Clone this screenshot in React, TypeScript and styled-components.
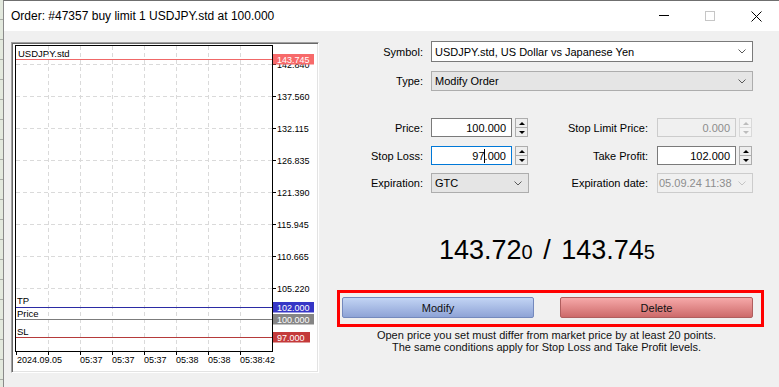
import React from "react";
import styled, { createGlobalStyle } from "styled-components";

const GlobalStyle = createGlobalStyle`
  html, body {
    margin: 0;
    padding: 0;
    background: #dfe5da;
  }
  body {
    font-family: "Liberation Sans", Arial, sans-serif;
    font-size: 11px;
    color: #000;
  }
  * {
    box-sizing: border-box;
  }
`;

const Screen = styled.div`
  display: flex;
  width: 779px;
  height: 387px;
  overflow: hidden;
`;

const Desktop = styled.div`
  width: 3px;
  flex: none;
  background: repeating-linear-gradient(
    to bottom,
    #e3e9de 0px,
    #e3e9de 19px,
    #a9ada6 19px,
    #a9ada6 20px
  );
`;

const Window = styled.div`
  flex: 1;
  display: flex;
  flex-direction: column;
  border-left: 1px solid #8a8a8a;
  border-top: 1px solid #6f6f6f;
  background: #f0f0f0;
`;

const TitleBar = styled.div`
  height: 30px;
  flex: none;
  display: flex;
  align-items: center;
  background: #ffffff;
  padding-left: 7px;
`;

const Title = styled.div`
  flex: 1;
  font-size: 12px;
  color: #000;
  white-space: nowrap;
`;

const CaptionButton = styled.div`
  width: 46px;
  height: 30px;
  display: flex;
  align-items: center;
  justify-content: center;
`;

const Body = styled.div`
  flex: 1;
  display: flex;
`;

const ChartPanel = styled.div`
  width: 308px;
  height: 331px;
  margin: 11px 0 0 7px;
  flex: none;
  background: #ffffff;
  border: 1px solid;
  border-color: #a0a0a0 #ffffff #ffffff #a0a0a0;
  box-shadow: inset 1px 1px 0 #696969, inset -1px -1px 0 #e3e3e3;

  svg {
    display: block;
  }
`;

const Form = styled.div`
  flex: 1;
  display: flex;
  flex-direction: column;
`;

const SelectRow = styled.div<{ $h: number; $mt: number }>`
  display: grid;
  grid-template-columns: 112px 322px;
  height: ${(p) => p.$h}px;
  margin-top: ${(p) => p.$mt}px;
`;

const ParamRow = styled.div<{ $h: number; $mt: number }>`
  display: grid;
  grid-template-columns: 112px 98px 128px 96px;
  height: ${(p) => p.$h}px;
  margin-top: ${(p) => p.$mt}px;
`;

const Label = styled.div<{ $pad?: number }>`
  display: flex;
  align-items: center;
  justify-content: flex-end;
  padding-right: ${(p) => p.$pad ?? 8}px;
  white-space: nowrap;
`;

const FieldCell = styled.div`
  display: flex;
  gap: 3px;
`;

type Tone = "white" | "grey" | "disabled";

const comboBorder: Record<Tone, string> = {
  white: "#7a7a7a",
  grey: "#adadad",
  disabled: "#cccccc",
};

const comboBg: Record<Tone, string> = {
  white: "#ffffff",
  grey: "#e5e5e5",
  disabled: "#f0f0f0",
};

const Combo = styled.div<{ $tone: Tone; $padLeft?: number }>`
  flex: 1;
  height: 100%;
  display: flex;
  align-items: center;
  padding: 0 6px 0 ${(p) => p.$padLeft ?? 3}px;
  border: 1px solid ${(p) => comboBorder[p.$tone]};
  background: ${(p) => comboBg[p.$tone]};
  color: ${(p) => (p.$tone === "disabled" ? "#8d8d8d" : "#000")};
  white-space: nowrap;
  overflow: hidden;
`;

const ComboText = styled.span`
  flex: 1;
`;

const NumberBox = styled.div<{ $w: number; $state?: "focus" | "disabled" }>`
  width: ${(p) => p.$w}px;
  height: 100%;
  display: flex;
  align-items: center;
  justify-content: flex-end;
  padding-right: 5px;
  border: 1px solid
    ${(p) =>
      p.$state === "focus"
        ? "#0078d7"
        : p.$state === "disabled"
          ? "#cccccc"
          : "#7a7a7a"};
  background: ${(p) => (p.$state === "disabled" ? "#f0f0f0" : "#ffffff")};
  color: ${(p) => (p.$state === "disabled" ? "#8d8d8d" : "#000")};
`;

const Caret = styled.span`
  display: inline-block;
  width: 1px;
  height: 14px;
  background: #000;
  margin: 0 -0.5px;
`;

const Spinner = styled.div<{ $disabled?: boolean }>`
  width: 13px;
  height: 100%;
  display: flex;
  flex-direction: column;
  border: 1px solid ${(p) => (p.$disabled ? "#d9d9d9" : "#adadad")};
  background: ${(p) => (p.$disabled ? "#f4f4f4" : "#eeeeee")};
`;

const SpinButton = styled.div<{ $top?: boolean; $disabled?: boolean }>`
  flex: 1;
  display: flex;
  align-items: center;
  justify-content: center;
  border-bottom: ${(p) =>
    p.$top ? `1px solid ${p.$disabled ? "#d9d9d9" : "#adadad"}` : "none"};
`;

const Arrow = styled.span<{ $dir: "up" | "down"; $disabled?: boolean }>`
  width: 0;
  height: 0;
  border-left: 3px solid transparent;
  border-right: 3px solid transparent;
  ${(p) =>
    p.$dir === "up"
      ? `border-bottom: 3px solid ${p.$disabled ? "#bcbcbc" : "#000"};`
      : `border-top: 3px solid ${p.$disabled ? "#bcbcbc" : "#000"};`}
`;

const Quote = styled.div`
  margin-top: 41px;
  padding-right: 4px;
  text-align: center;
  font-size: 27px;
  line-height: 32px;
  color: #000;
  white-space: nowrap;
`;

const QuoteTail = styled.span`
  font-size: 20px;
  line-height: 1;
`;

const QuoteSep = styled.span`
  margin: 0 3px;
`;

const ActionBox = styled.div`
  margin: 24px 0 0 18px;
  width: 427px;
  height: 37px;
  border: 3px solid #ff0000;
  padding: 4px 8px 0 2px;
  display: flex;
  gap: 26px;
`;

const ActionButton = styled.div<{ $kind: "modify" | "delete" }>`
  height: 21px;
  width: ${(p) => (p.$kind === "modify" ? 192 : 193)}px;
  display: flex;
  align-items: center;
  justify-content: center;
  font-size: 11px;
  color: #111;
  border-radius: 2px;
  border: 1px solid ${(p) => (p.$kind === "modify" ? "#7489bd" : "#b05e5e")};
  background: ${(p) =>
    p.$kind === "modify"
      ? "linear-gradient(to bottom, #c2d4f4, #8ea3d6)"
      : "linear-gradient(to bottom, #f6a9a9, #cd6a6a)"};
`;

const Notice = styled.div`
  margin-top: 2px;
  padding-right: 5px;
  text-align: center;
  line-height: 12px;
  color: #111;
`;

const Chevron = ({ disabled }: { disabled?: boolean }) => (
  <svg width="8" height="5" viewBox="0 0 8 5">
    <polyline
      points="0.5,0.5 4,4 7.5,0.5"
      fill="none"
      stroke={disabled ? "#c4c4c4" : "#5a5a5a"}
      strokeWidth="1"
    />
  </svg>
);

const hLines = [64.5, 96.5, 128.5, 160.5, 192.5, 224.5, 256.5, 288.5];
const vLines = [48.5, 80.5, 112.5, 144.5, 176.5, 208.5, 240.5];
const yLabels: [string, number][] = [
  ["142.840", 64.5],
  ["137.560", 96.5],
  ["132.115", 128.5],
  ["126.835", 160.5],
  ["121.390", 192.5],
  ["115.945", 224.5],
  ["110.665", 256.5],
  ["105.220", 288.5],
];
const timeLabels: [string, number][] = [
  ["2024.09.05", 17],
  ["05:37", 80],
  ["05:37", 112],
  ["05:37", 144],
  ["05:38", 176],
  ["05:38", 208],
  ["05:38:42", 240],
];

const levels = [
  { name: "TP", nameY: 304, y: 307.5, line: "#2b2ba4", box: "#3636c6", value: "102.000", boxY: 302, boxW: 41 },
  { name: "Price", nameY: 317, y: 319.5, line: "#7c7c7c", box: "#858585", value: "100.000", boxY: 314, boxW: 41 },
  { name: "SL", nameY: 335, y: 337.5, line: "#b53a3a", box: "#c43a3a", value: "97.000", boxY: 332, boxW: 37 },
];

const PriceChart = () => (
  <svg
    width={306}
    height={329}
    viewBox="12 43 306 329"
    fontFamily='"Liberation Sans", Arial, sans-serif'
    fontSize={9}
  >
    {hLines.map((y) => (
      <line key={`h${y}`} x1={16} x2={272} y1={y} y2={y} stroke="#dadada" strokeDasharray="4 3" />
    ))}
    {vLines.map((x) => (
      <line key={`v${x}`} x1={x} x2={x} y1={46} y2={351} stroke="#dadada" strokeDasharray="4 3" />
    ))}
    <rect x={15.5} y={45.5} width={257} height={306} fill="none" stroke="#000" />
    {yLabels.map(([t, y]) => (
      <g key={t}>
        <line x1={272} x2={276} y1={y} y2={y} stroke="#000" />
        <text x={277} y={y + 3.5} fill="#000">
          {t}
        </text>
      </g>
    ))}
    {[16, ...vLines.map((x) => x - 0.5)].map((x) => (
      <line key={`t${x}`} x1={x + 0.5} x2={x + 0.5} y1={351} y2={355} stroke="#000" />
    ))}
    {timeLabels.map(([t, x], i) => (
      <text key={`${t}${i}`} x={x} y={363} fill="#000">
        {t}
      </text>
    ))}
    <text x={18} y={56.5} fill="#000" fontSize={9.5}>
      USDJPY.std
    </text>
    <line x1={16} x2={272} y1={59.5} y2={59.5} stroke="#f06868" />
    <rect x={273} y={54} width={41} height={10.5} fill="#f76a6a" />
    <text x={277} y={63} fill="#fff">
      143.745
    </text>
    {levels.map((l) => (
      <g key={l.name}>
        <line x1={16} x2={272} y1={l.y} y2={l.y} stroke={l.line} />
        <text x={17} y={l.nameY} fill="#000" fontSize={9.5}>
          {l.name}
        </text>
        <rect x={273} y={l.boxY} width={l.boxW} height={10.5} fill={l.box} />
        <text x={277} y={l.boxY + 9} fill="#fff">
          {l.value}
        </text>
      </g>
    ))}
  </svg>
);

const Spin = ({ disabled }: { disabled?: boolean }) => (
  <Spinner $disabled={disabled}>
    <SpinButton $top $disabled={disabled}>
      <Arrow $dir="up" $disabled={disabled} />
    </SpinButton>
    <SpinButton $disabled={disabled}>
      <Arrow $dir="down" $disabled={disabled} />
    </SpinButton>
  </Spinner>
);

export default function App() {
  return (
    <>
      <GlobalStyle />
      <Screen>
        <Desktop />
        <Window>
          <TitleBar>
            <Title>Order: #47357 buy limit 1 USDJPY.std at 100.000</Title>
            <CaptionButton>
              <svg width="10" height="10" viewBox="0 0 10 10">
                <line x1="0" x2="10" y1="4.5" y2="4.5" stroke="#000" />
              </svg>
            </CaptionButton>
            <CaptionButton>
              <svg width="10" height="10" viewBox="0 0 10 10">
                <rect x="0.5" y="0.5" width="9" height="9" fill="none" stroke="#c6c6c6" />
              </svg>
            </CaptionButton>
            <CaptionButton>
              <svg width="11" height="11" viewBox="0 0 11 11">
                <path d="M0.5 0.5 L10.5 10.5 M10.5 0.5 L0.5 10.5" stroke="#000" strokeWidth="1" />
              </svg>
            </CaptionButton>
          </TitleBar>
          <Body>
            <ChartPanel>
              <PriceChart />
            </ChartPanel>
            <Form>
              <SelectRow $h={21} $mt={10}>
                <Label>Symbol:</Label>
                <Combo $tone="white">
                  <ComboText>USDJPY.std, US Dollar vs Japanese Yen</ComboText>
                  <Chevron />
                </Combo>
              </SelectRow>
              <SelectRow $h={20} $mt={9}>
                <Label>Type:</Label>
                <Combo $tone="grey">
                  <ComboText>Modify Order</ComboText>
                  <Chevron />
                </Combo>
              </SelectRow>

              <ParamRow $h={19} $mt={27}>
                <Label>Price:</Label>
                <FieldCell>
                  <NumberBox $w={81}>100.000</NumberBox>
                  <Spin />
                </FieldCell>
                <Label $pad={9}>Stop Limit Price:</Label>
                <FieldCell>
                  <NumberBox $w={79} $state="disabled">
                    0.000
                  </NumberBox>
                  <Spin disabled />
                </FieldCell>
              </ParamRow>
              <ParamRow $h={19} $mt={9}>
                <Label>Stop Loss:</Label>
                <FieldCell>
                  <NumberBox $w={81} $state="focus">
                    97
                    <Caret />
                    .000
                  </NumberBox>
                  <Spin />
                </FieldCell>
                <Label $pad={9}>Take Profit:</Label>
                <FieldCell>
                  <NumberBox $w={79}>102.000</NumberBox>
                  <Spin />
                </FieldCell>
              </ParamRow>
              <ParamRow $h={20} $mt={8}>
                <Label>Expiration:</Label>
                <FieldCell>
                  <Combo $tone="grey">
                    <ComboText>GTC</ComboText>
                    <Chevron />
                  </Combo>
                </FieldCell>
                <Label $pad={9}>Expiration date:</Label>
                <FieldCell>
                  <Combo $tone="disabled" $padLeft={1}>
                    <ComboText>05.09.24 11:38</ComboText>
                    <Chevron disabled />
                  </Combo>
                </FieldCell>
              </ParamRow>

              <Quote>
                143.72<QuoteTail>0</QuoteTail>
                <QuoteSep> / </QuoteSep>
                143.74<QuoteTail>5</QuoteTail>
              </Quote>

              <ActionBox>
                <ActionButton $kind="modify">Modify</ActionButton>
                <ActionButton $kind="delete">Delete</ActionButton>
              </ActionBox>

              <Notice>
                Open price you set must differ from market price by at least 20 points.
                <br />
                The same conditions apply for Stop Loss and Take Profit levels.
              </Notice>
            </Form>
          </Body>
        </Window>
      </Screen>
    </>
  );
}
